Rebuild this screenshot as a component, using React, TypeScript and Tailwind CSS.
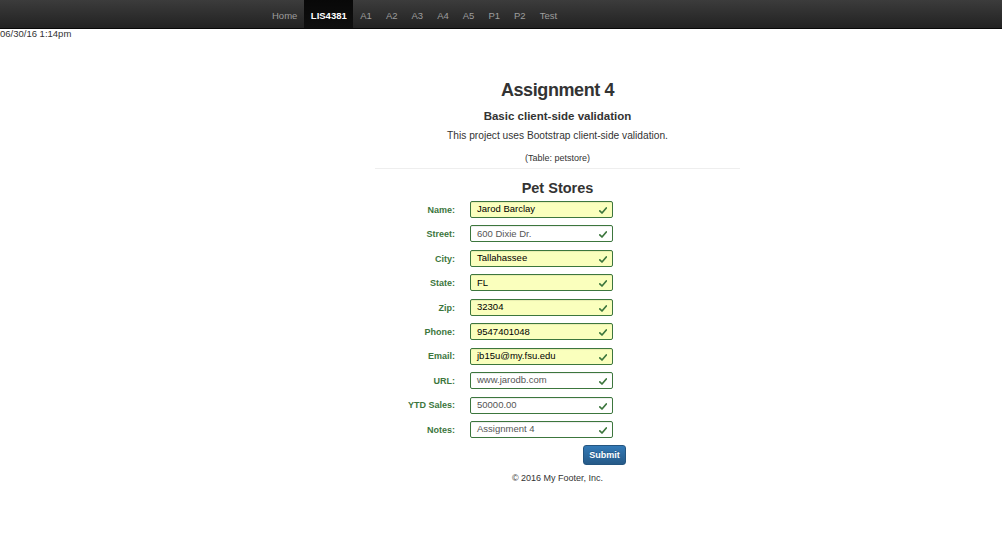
import React from "react";

const rows: { label: string; value: string; filled: boolean }[] = [
  { label: "Name:", value: "Jarod Barclay", filled: true },
  { label: "Street:", value: "600 Dixie Dr.", filled: false },
  { label: "City:", value: "Tallahassee", filled: true },
  { label: "State:", value: "FL", filled: true },
  { label: "Zip:", value: "32304", filled: true },
  { label: "Phone:", value: "9547401048", filled: true },
  { label: "Email:", value: "jb15u@my.fsu.edu", filled: true },
  { label: "URL:", value: "www.jarodb.com", filled: false },
  { label: "YTD Sales:", value: "50000.00", filled: false },
  { label: "Notes:", value: "Assignment 4", filled: false },
];

const navItems = ["Home", "LIS4381", "A1", "A2", "A3", "A4", "A5", "P1", "P2", "Test"];

function Check() {
  return (
    <svg width="8" height="7" viewBox="0 0 8 7" className="absolute right-[5px] top-[5px]">
      <path d="M0.8 3.8 L3 6 L7.3 1" fill="none" stroke="#3c763d" strokeWidth="1.7" strokeLinecap="round" strokeLinejoin="round" />
    </svg>
  );
}

export default function App() {
  return (
    <div className="min-h-[543px] w-[1002px] bg-white text-[#333]" style={{ fontFamily: '"Liberation Sans", Arial, sans-serif' }}>
      <div className="h-[29px] border-b border-[#080808] bg-gradient-to-b from-[#3c3c3c] to-[#222]">
        <div className="flex h-full pl-[265px]">
          {navItems.map((n) =>
            n === "LIS4381" ? (
              <div key={n} className="flex h-full items-center bg-gradient-to-b from-[#080808] to-[#0f0f0f] px-[6.5px] pt-[4px] text-[9.5px] font-bold text-white">
                {n}
              </div>
            ) : (
              <div key={n} className="flex h-full items-center px-[7px] pt-[4px] text-[9.5px] text-[#9d9d9d]">
                {n}
              </div>
            )
          )}
        </div>
      </div>
      <div className="text-[9.5px] leading-[10px] text-[#333]">06/30/16 1:14pm</div>

      <div className="ml-[375px] flex w-[365px] flex-col items-center">
        <div className="mt-[40px] text-[18px] font-bold leading-[22px] tracking-[-0.4px] text-[#333]">Assignment 4</div>
        <div className="mt-[7px] text-[11.5px] font-bold leading-[16px] text-[#333]">Basic client-side validation</div>
        <div className="mt-[5px] text-[10.2px] leading-[14px] text-[#333]">This project uses Bootstrap client-side validation.</div>
        <div className="mt-[9px] text-[9px] leading-[12px] text-[#333]">(Table: petstore)</div>
        <div className="mt-[4px] h-px w-full bg-[#eee]" />
        <div className="mt-[10px] text-[14.5px] font-bold leading-[18px] text-[#333]">Pet Stores</div>
      </div>

      <div className="mt-[4px] flex flex-col gap-[7.45px]">
        {rows.map((r) => (
          <div key={r.label} className="flex h-[17px] items-center">
            <div className="w-[455px] pt-[2px] text-right text-[9px] font-bold text-[#3c763d]">{r.label}</div>
            <div
              className={`relative ml-[15px] flex h-[17px] w-[143px] items-center rounded-[2px] border border-[#3c763d] pl-[6px] text-[9.5px] shadow-[inset_0_1px_1px_rgba(0,0,0,0.075)] ${
                r.filled ? "bg-[#faffbd] text-black" : "bg-white text-[#555]"
              }`}
            >
              {r.value}
              <Check />
            </div>
          </div>
        ))}
      </div>

      <div className="ml-[583px] mt-[7.5px] flex h-[20px] w-[43px] items-center justify-center rounded-[3px] border border-[#245580] bg-gradient-to-b from-[#337ab7] to-[#265a88] text-[9px] font-bold text-white [text-shadow:0_-1px_0_rgba(0,0,0,0.2)]">
        Submit
      </div>

      <div className="ml-[375px] mt-[7px] w-[365px] text-center text-[9px] leading-[12px] text-[#333]">© 2016 My Footer, Inc.</div>
    </div>
  );
}
